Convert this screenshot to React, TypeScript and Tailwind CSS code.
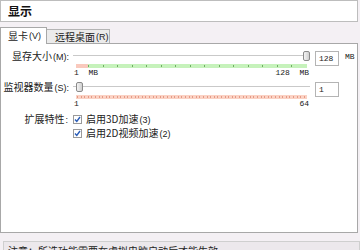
const cjk = "font-['Noto_Sans_CJK_SC','Noto_Sans',sans-serif]";
const mono = "font-['Liberation_Mono','DejaVu_Sans_Mono',monospace]";

// CJK text with a narrow latin suffix like "(M):"
function Lbl({ zh, tail }: { zh: string; tail?: string }) {
  return (
    <>
      {zh}
      {tail && (
        <span className="ml-[1px] font-['Liberation_Sans',sans-serif] text-[9px]">
          {tail}
        </span>
      )}
    </>
  );
}

function Thumb({ left }: { left: number }) {
  return (
    <div
      className="absolute top-[1px] h-[10px] w-[7px] rounded-[2px] border border-[#8a8a8a] bg-gradient-to-r from-[#f4f4f4] to-[#cfcfcf]"
      style={{ left }}
    />
  );
}

function GreenScale() {
  const ticks = Array.from({ length: 15 }, (_, i) => 12 + i * 14.5);
  return (
    <div className="relative mx-[3px] flex h-[4px]">
      <div className="w-[12px] bg-[#f9c9bd]" />
      <div className="flex-1 bg-[#c6f2bb]" />
      {ticks.map((x) => (
        <div
          key={x}
          className="absolute top-[1px] h-[2px] w-px bg-[#6fae62]"
          style={{ left: x }}
        />
      ))}
    </div>
  );
}

function RedScale() {
  const ticks = Array.from({ length: 64 }, (_, i) => 1 + i * 3.6);
  return (
    <div className="relative mx-[3px] h-[4px] bg-[#fbd2c4]">
      {ticks.map((x) => (
        <div
          key={x}
          className="absolute top-[1px] h-[2px] w-px bg-[#e49a86]"
          style={{ left: x }}
        />
      ))}
    </div>
  );
}

function SliderRow({
  label,
  value,
  unit,
  thumb,
  scale,
  min,
  max,
}: {
  label: React.ReactNode;
  value: string;
  unit?: string;
  thumb: number;
  scale: React.ReactNode;
  min: string;
  max: string;
}) {
  return (
    <div className="flex">
      <div className="w-[72px] whitespace-nowrap pr-[4px] text-right text-[10px] leading-[12px] text-[#222]">
        {label}
      </div>
      <div className="w-[237px]">
        <div className="relative h-[12px]">
          <div className="absolute left-0 right-0 top-[5px] h-[2px] border-t border-[#c9c9c9] bg-white" />
          <Thumb left={thumb} />
        </div>
        <div className="mt-[2px]">{scale}</div>
        <div
          className={`flex h-[10px] justify-between px-[1px] text-[8px] leading-[10px] text-[#222] ${mono}`}
        >
          <span className="whitespace-pre">{min}</span>
          <span className="whitespace-pre">{max}</span>
        </div>
      </div>
      <div
        className={`ml-[5px] mt-[1px] h-[15px] w-[24px] border border-[#b4b4b4] bg-white pl-[3px] text-[8px] leading-[13px] text-[#222] ${mono}`}
      >
        {value}
      </div>
      {unit && (
        <div className={`ml-[6px] text-[8px] leading-[14px] text-[#222] ${mono}`}>
          {unit}
        </div>
      )}
    </div>
  );
}

function Check({ zh, tail }: { zh: string; tail: string }) {
  return (
    <div className="flex h-[14px] items-center">
      <div className="flex h-[9px] w-[9px] shrink-0 items-center justify-center border border-[#9a9a9a] bg-white">
        <svg width="7" height="7" viewBox="0 0 7 7">
          <path d="M1 3.5 L2.8 5.5 L6 1" stroke="#2a5db8" strokeWidth="1.4" fill="none" />
        </svg>
      </div>
      <span className="ml-[4px] whitespace-nowrap text-[10px] leading-[12px] text-[#222]">
        <Lbl zh={zh} tail={tail} />
      </span>
    </div>
  );
}

export default function App() {
  return (
    <div className={`h-[250px] w-[360px] overflow-hidden bg-[#f4f0f4] ${cjk}`}>
      <div className="flex h-[22px] w-[358px] items-center border border-[#bdbdbd] bg-white pl-[7px] text-[12px] font-bold leading-[14px] text-[#111]">
        显示
      </div>

      <div className="mt-[5px] flex items-end">
        <div className="relative z-10 -mb-px flex h-[17px] w-[47px] items-center whitespace-nowrap border border-b-0 border-[#a8a8a8] bg-white pl-[7px] text-[10px] leading-[12px] text-[#222]">
          <Lbl zh="显卡" tail="(V)" />
        </div>
        <div className="flex h-[14px] w-[63px] items-center whitespace-nowrap border border-b-0 border-l-0 border-[#b4b4b4] bg-[#ebebeb] pl-[8px] text-[10px] leading-[12px] text-[#222]">
          <Lbl zh="远程桌面" tail="(R)" />
        </div>
      </div>

      <div className="h-[190px] w-[358px] border border-[#a8a8a8] bg-white pt-[6px]">
        <SliderRow
          label={<Lbl zh="显存大小" tail="(M):" />}
          value="128"
          unit="MB"
          thumb={230}
          scale={<GreenScale />}
          min="1  MB"
          max="128  MB"
        />
        <div className="mt-[3px]">
          <SliderRow
            label={<Lbl zh="监视器数量" tail="(S):" />}
            value="1"
            thumb={3}
            scale={<RedScale />}
            min="1"
            max="64"
          />
        </div>
        <div className="mt-[3px] flex">
          <div className="w-[72px] pr-[5px] text-right text-[10px] leading-[14px] text-[#222]">
            <Lbl zh="扩展特性" tail=":" />
          </div>
          <div>
            <Check zh="启用3D加速" tail="(3)" />
            <Check zh="启用2D视频加速" tail="(2)" />
          </div>
        </div>
      </div>

      <div className="ml-[3px] mt-[8px] h-[20px] whitespace-nowrap border border-[#cfcfcf] bg-[#ece8ec] pl-[4px] pt-[3px] text-[10px] leading-[12px] text-[#222]">
        注意：所选功能需要在虚拟电脑启动后才能生效。
      </div>
    </div>
  );
}
